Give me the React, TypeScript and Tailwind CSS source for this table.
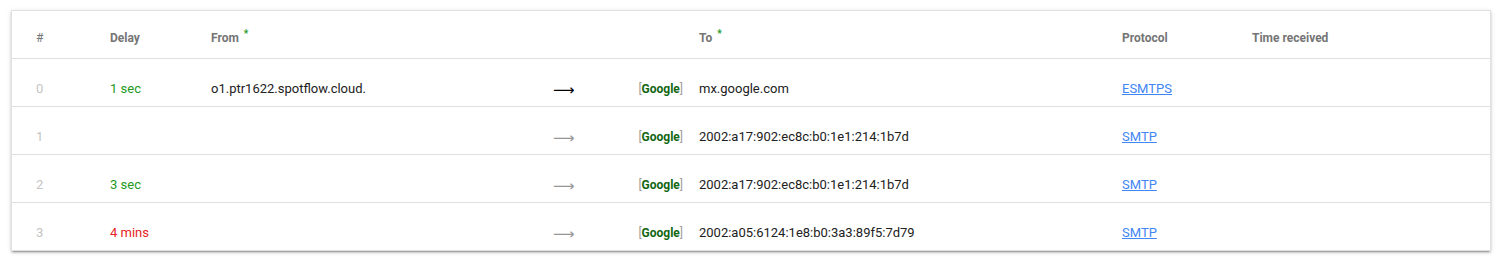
const ROWS = [
  { hop: 0, delay: '1 sec', delayTone: 'text-[#229922]', from: 'o1.ptr1622.spotflow.cloud.', first: true, to: 'mx.google.com', proto: 'ESMTPS' },
  { hop: 1, delay: '', delayTone: '', from: '', first: false, to: '2002:a17:902:ec8c:b0:1e1:214:1b7d', proto: 'SMTP' },
  { hop: 2, delay: '3 sec', delayTone: 'text-[#229922]', from: '', first: false, to: '2002:a17:902:ec8c:b0:1e1:214:1b7d', proto: 'SMTP' },
  { hop: 3, delay: '4 mins', delayTone: 'text-[#e52222]', from: '', first: false, to: '2002:a05:6124:1e8:b0:3a3:89f5:7d79', proto: 'SMTP' },
];

const COLS = 'grid grid-cols-[98px_101px_342px_60px_86px_423px_130px_1fr]';

export default function App() {
  return (
    <div className="min-h-[260px] bg-white pt-[10px] pl-[11px] pr-[14px]" style={{ fontFamily: 'Roboto, "Liberation Sans", sans-serif' }}>
      <div className="w-[1480px] border border-[#e0e0e0] bg-white shadow-[0_2px_2px_0_rgba(0,0,0,0.14),0_3px_1px_-2px_rgba(0,0,0,0.2),0_1px_5px_0_rgba(0,0,0,0.12)]">
        {/* Header */}
        <div className={`${COLS} h-[47px] items-center pt-[7px] text-[12px] font-bold text-[#757575]`}>
          <div className="pl-6 font-normal">#</div>
          <div>Delay</div>
          <div>
            From <sup className="ml-[2px] text-[10px] text-[#229922]">*</sup>
          </div>
          <div />
          <div />
          <div>
            To <sup className="ml-[2px] text-[10px] text-[#229922]">*</sup>
          </div>
          <div>Protocol</div>
          <div>Time received</div>
        </div>

        {ROWS.map((r) => (
          <div key={r.hop} className={`${COLS} h-[48px] items-center border-t border-[#e0e0e0] pt-[12px] text-[13px] text-[#212121]`}>
            <div className="pl-6 text-[#c4c4c4]">{r.hop}</div>
            <div className={r.delayTone}>{r.delay}</div>
            <div>{r.from}</div>
            <div className={`pt-[4px] text-[15px] leading-none ${r.first ? 'text-black' : 'text-[#969696]'}`} style={{ fontFamily: '"DejaVu Sans", sans-serif' }}>
              ⟶
            </div>
            <div className="pr-4 text-right text-[12px] text-[#9e9e9e]">
              [<span className="font-bold text-[#116611]">Google</span>]
            </div>
            <div>{r.to}</div>
            <div>
              <a href="#" className="text-[#4285f4] underline">{r.proto}</a>
            </div>
            <div />
          </div>
        ))}
      </div>
    </div>
  );
}
